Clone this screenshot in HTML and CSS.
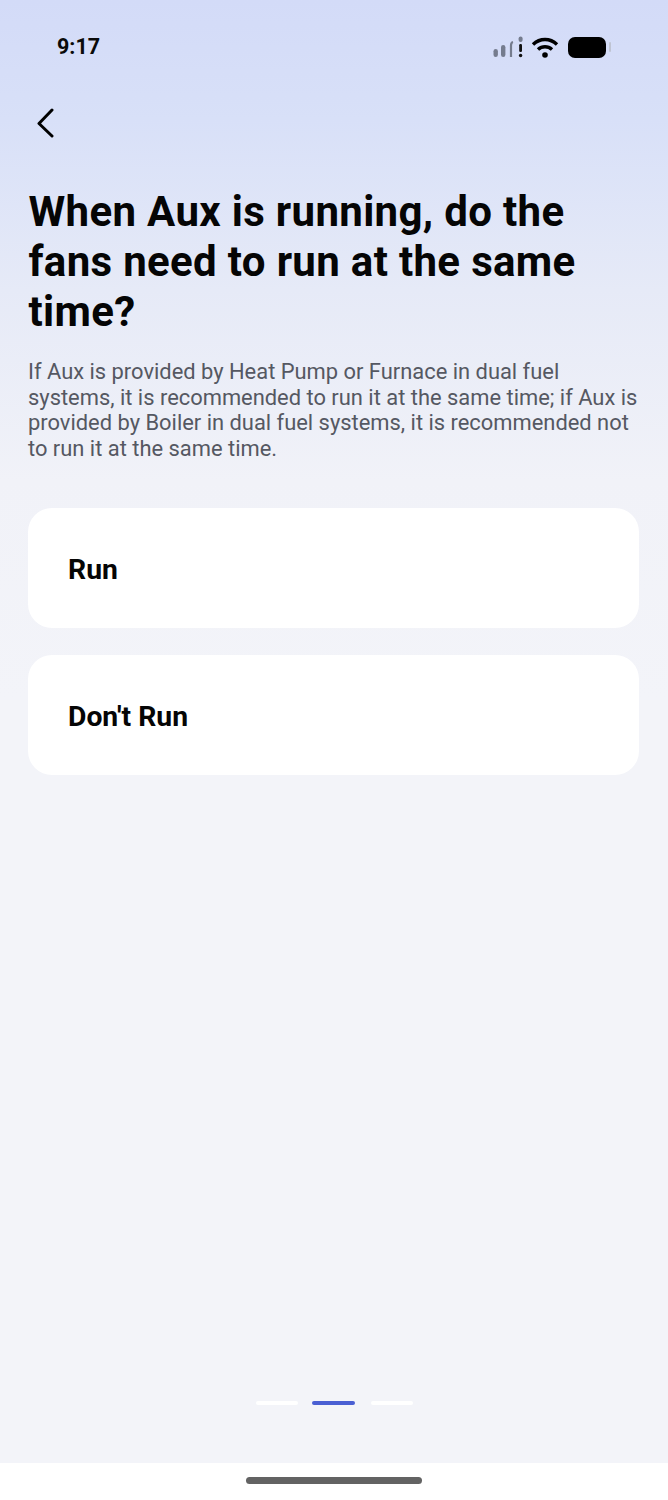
FILE: index.html
```html
<!DOCTYPE html>
<html lang="en">
<head>
<meta charset="utf-8">
<title>Aux fans</title>
<link rel="stylesheet" href="styles.css">
</head>
<body>
<div class="screen">
  <main class="main">
    <div class="status">
      <span class="clock">9:17</span>
      <div class="status-icons">
        <svg class="signal" width="36" height="22" viewBox="0 0 36 22">
          <rect x="0.5" y="13" width="4.4" height="8" rx="2.2" fill="#757c8e"/>
          <rect x="8" y="9" width="4.4" height="12" rx="2.2" fill="#757c8e"/>
          <path d="M18 21V9.5Q18 6.5 20 6" stroke="#757c8e" stroke-width="2.2" fill="none"/>
          <rect x="25.6" y="0.5" width="4" height="5.5" rx="2" fill="#757c8e"/>
          <rect x="26.2" y="8" width="2.8" height="8" rx="1.2" fill="#111"/>
          <circle cx="27.6" cy="19.5" r="1.7" fill="#111"/>
        </svg>
        <svg class="wifi" width="28" height="22" viewBox="0 0 28 22">
          <path d="M2 8.5C9 1.8 19 1.8 26 8.5" stroke="#000" stroke-width="3.4" fill="none"/>
          <path d="M7 13.5C11 9.8 17 9.8 21 13.5" stroke="#000" stroke-width="3.4" fill="none"/>
          <circle cx="14" cy="19" r="2.8" fill="#000"/>
        </svg>
        <div class="battery"><span class="battery-fill"></span><span class="battery-cap"></span></div>
      </div>
    </div>
    <button class="back" aria-label="Back">
      <svg width="20" height="30" viewBox="0 0 20 30">
        <path d="M17 2L4 15.5L17 28" stroke="#000" stroke-width="3" fill="none" stroke-linecap="round" stroke-linejoin="round"/>
      </svg>
    </button>
    <h1 class="title">When Aux is running, do the fans need to run at the same time?</h1>
    <p class="desc">If Aux is provided by Heat Pump or Furnace in dual fuel systems, it is recommended to run it at the same time; if Aux is provided by Boiler in dual fuel systems, it is recommended not to run it at the same time.</p>
    <div class="options">
      <div class="option">Run</div>
      <div class="option">Don't Run</div>
    </div>
    <div class="pager">
      <span class="dash"></span>
      <span class="dash dash-active"></span>
      <span class="dash"></span>
    </div>
  </main>
  <footer class="home-area"><span class="home-bar"></span></footer>
</div>
</body>
</html>
```
FILE: styles.css
```css
* { box-sizing: border-box; }
html, body { margin: 0; padding: 0; }
body { font-family: Roboto, "Liberation Sans", sans-serif; background: #fff; }
.screen { width: 668px; height: 1500px; display: flex; flex-direction: column; }
.main {
  height: 1463px;
  padding: 0 29px 0 28px;
  display: flex;
  flex-direction: column;
  background: linear-gradient(180deg, #d3dbf8 0px, #d8e0f8 120px, #e6eaf7 290px, #f1f2f8 480px, #f3f4f9 700px);
}
.status { height: 64px; padding: 30px 28px 0 29px; display: flex; justify-content: space-between; align-items: flex-start; }
.clock { font-size: 21.5px; line-height: 34px; font-weight: 700; color: #0a0a0a; }
.status-icons { display: flex; align-items: center; gap: 1px; margin-top: 6px; }
.signal { margin-right: 1px; }
.battery { display: flex; align-items: center; margin-left: 8px; }
.battery-fill { width: 38px; height: 21px; border-radius: 7px; background: #000; display: block; }
.battery-cap { width: 2px; height: 10px; margin-left: 3px; border-radius: 1px; background: #bfc4d3; display: block; }
.back { width: 24px; height: 32px; margin: 44px 0 0 5px; padding: 0; border: 0; background: none; display: block; }
.title { margin: 47px 0 0; padding-left: 0.5px; font-size: 42px; line-height: 50px; font-weight: 700; color: #050505; letter-spacing: 0.33px; }
.desc { margin: 22px -6px 0 0; font-size: 21.9px; line-height: 25.7px; font-weight: 400; color: #555862; }
.options { margin-top: 46px; display: flex; flex-direction: column; gap: 27px; }
.option {
  height: 120px;
  padding: 3px 0 0 40px;
  display: flex;
  align-items: center;
  background: #fff;
  border-radius: 24px;
  font-size: 28.3px;
  font-weight: 700;
  color: #050505;
}
.pager { margin-top: auto; margin-bottom: 58px; padding-left: 1px; display: flex; justify-content: center; gap: 15px; }
.dash { width: 42px; height: 4px; background: #fff; border-radius: 2px; display: block; }
.dash-active { width: 43px; margin: 0 1px 0 -1px; background: #4a5fd3; }
.home-area { height: 37px; display: flex; justify-content: center; padding-top: 14px; background: #fff; }
.home-bar { width: 176px; height: 7px; border-radius: 4px; background: #636363; display: block; }
```
